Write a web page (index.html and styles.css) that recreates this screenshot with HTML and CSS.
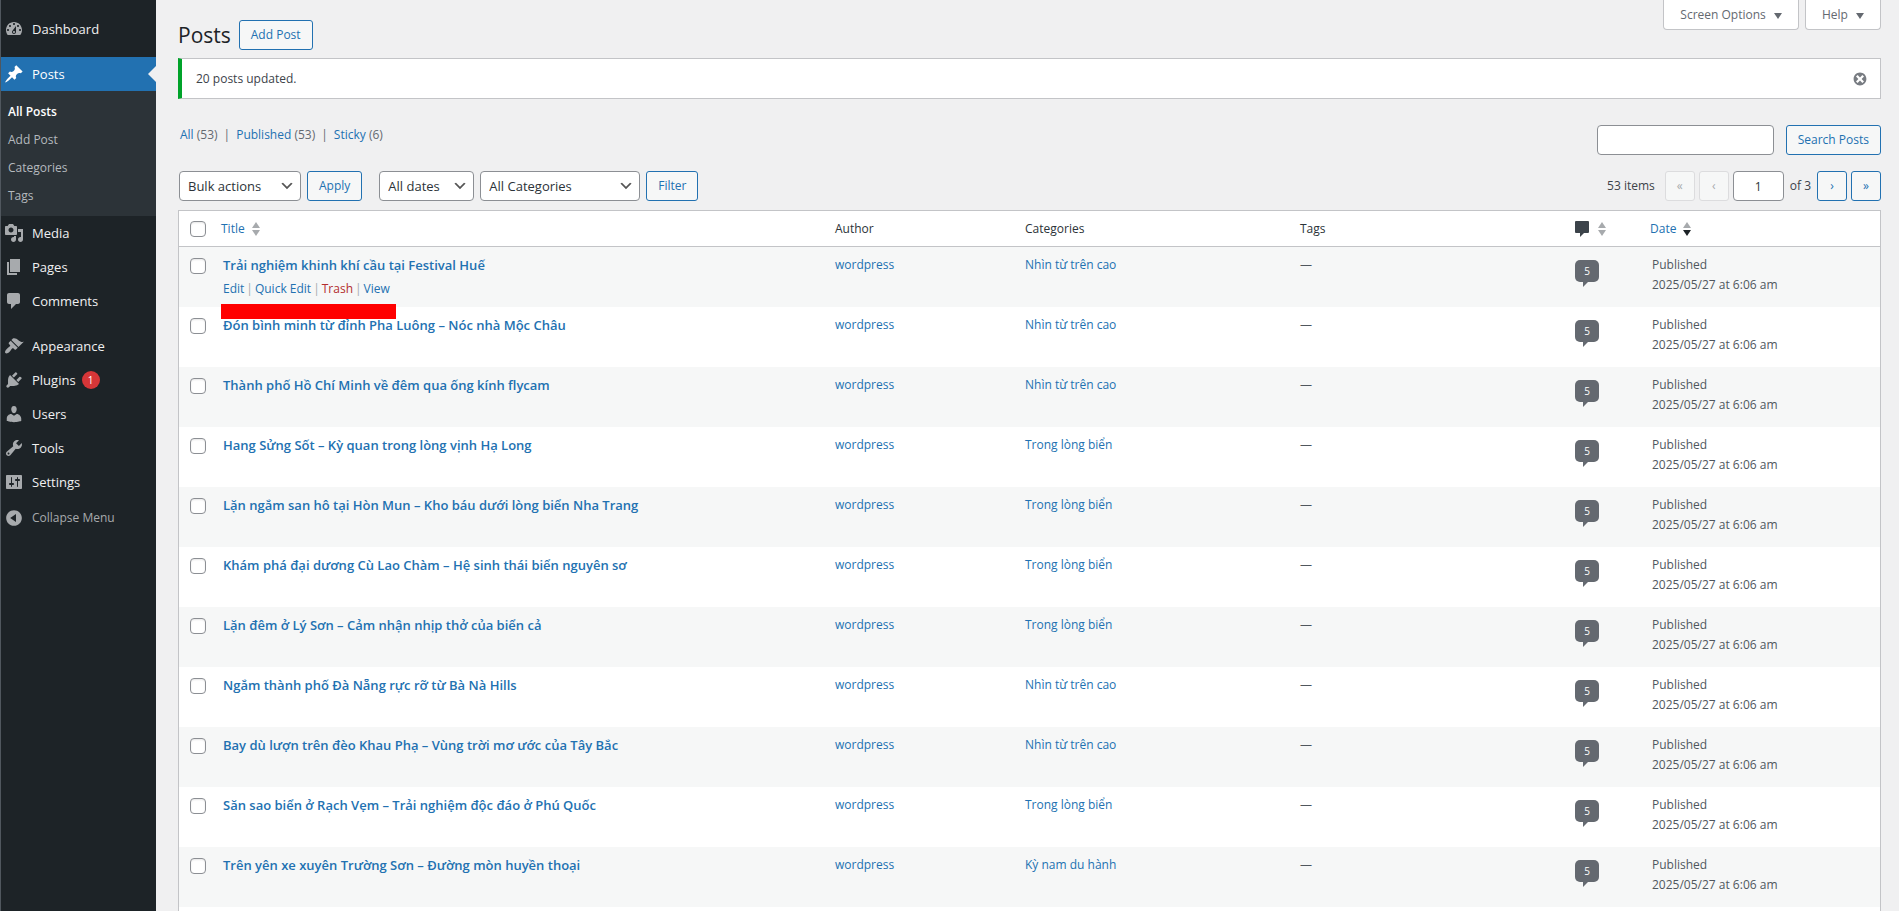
FILE: index.html
```
<!DOCTYPE html>
<html lang="en">
<head>
  <meta charset="UTF-8">
  <title>Posts</title>
  <link rel="stylesheet" href="styles.css">
</head>
<body>
<div id="adminmenu">
  <ul class="menu">
    <li><a href="#"><svg viewBox="0 0 20 20"><path d="M3.76 16h12.48c1.1-1.37 1.76-3.11 1.76-5 0-4.42-3.58-8-8-8s-8 3.58-8 8c0 1.89.66 3.63 1.76 5zM10 4c.55 0 1 .45 1 1s-.45 1-1 1-1-.45-1-1 .45-1 1-1zM6 6c.55 0 1 .45 1 1s-.45 1-1 1-1-.45-1-1 .45-1 1-1zm8 0c.55 0 1 .45 1 1s-.45 1-1 1-1-.45-1-1 .45-1 1-1zm-5.37 5.55L12 7v6c0 1.1-.9 2-2 2s-2-.9-2-2c0-.57.24-1.08.63-1.45zM4 10c.55 0 1 .45 1 1s-.45 1-1 1-1-.45-1-1 .45-1 1-1zm12 0c.55 0 1 .45 1 1s-.45 1-1 1-1-.45-1-1 .45-1 1-1zm-5 3c0-.55-.45-1-1-1s-1 .45-1 1 .45 1 1 1 1-.45 1-1z"/></svg>Dashboard</a></li>
    <li class="separator"></li>
    <li class="current"><a href="#"><svg viewBox="0 0 20 20"><path d="M10.44 3.02l1.82-1.82 6.36 6.35-1.83 1.82c-1.05-.68-2.48-.57-3.41.36l-.75.75c-.92.93-1.04 2.35-.35 3.41l-1.83 1.82-2.41-2.41-2.8 2.79c-.42.42-3.38 2.71-3.8 2.29s1.86-3.39 2.28-3.81l2.79-2.79L4.1 9.36l1.83-1.82c1.05.69 2.48.57 3.4-.36l.75-.75c.93-.92 1.05-2.35.36-3.41z"/></svg>Posts</a>
      <ul class="submenu">
        <li><a href="#" class="on">All Posts</a></li>
        <li><a href="#">Add Post</a></li>
        <li><a href="#">Categories</a></li>
        <li><a href="#">Tags</a></li>
      </ul>
    </li>
    <li><a href="#"><svg viewBox="0 0 20 20"><path d="M13 11V4c0-.55-.45-1-1-1h-1.67L9 1H5L3.67 3H2c-.55 0-1 .45-1 1v7c0 .55.45 1 1 1h10c.55 0 1-.45 1-1zM7 4.5c1.38 0 2.5 1.12 2.5 2.5S8.38 9.5 7 9.5 4.5 8.38 4.5 7 5.62 4.5 7 4.5zM14 6h5v10.5c0 1.38-1.12 2.5-2.5 2.5S14 17.88 14 16.5s1.12-2.5 2.5-2.5c.17 0 .34.02.5.05V9h-3V6zm-4 8.05V13h2v3.5c0 1.38-1.12 2.5-2.5 2.5S7 17.88 7 16.5 8.12 14 9.5 14c.17 0 .34.02.5.05z"/></svg>Media</a></li>
    <li><a href="#"><svg viewBox="0 0 20 20"><path d="M6 15V2h10v13H6zm-1 1h8v2H3V5h2v11z"/></svg>Pages</a></li>
    <li><a href="#"><svg viewBox="0 0 20 20"><path d="M5 2h9c1.1 0 2 .9 2 2v7c0 1.1-.9 2-2 2h-2l-5 5v-5H5c-1.1 0-2-.9-2-2V4c0-1.1.9-2 2-2z"/></svg>Comments</a></li>
    <li class="separator"></li>
    <li><a href="#"><svg viewBox="0 0 20 20"><path d="M14.48 11.06L7.41 3.99l1.5-1.5c.5-.56 2.3-.47 3.51.32 1.21.8 1.43 1.28 2.91 2.1 1.18.64 2.45 1.26 4.45.85zm-.71.71L6.7 4.7 4.93 6.47c-.39.39-.39 1.02 0 1.41l1.06 1.06c.39.39.39 1.03 0 1.42-.6.6-1.43 1.11-2.21 1.69-.35.26-.7.53-1.01.84C1.43 14.23.4 16.08 1.4 17.07c.99 1 2.84-.03 4.18-1.36.31-.31.58-.66.85-1.02.57-.78 1.08-1.61 1.69-2.21.39-.39 1.02-.39 1.41 0l1.06 1.06c.39.39 1.02.39 1.41 0z"/></svg>Appearance</a></li>
    <li><a href="#"><svg viewBox="0 0 20 20"><path d="M13.11 4.36L9.87 7.6 8 5.73l3.24-3.24c.35-.34 1.05-.2 1.56.32.52.51.66 1.21.31 1.55zm-8 1.77l.91-1.12 9.01 9.01-1.19.84c-.71.71-2.63 1.16-3.82 1.16H6.14L4.9 17.26c-.59.59-1.54.59-2.12 0a1.49 1.49 0 0 1 0-2.12l1.24-1.24v-3.88c0-1.13.4-3.19 1.09-3.89zm7.26 3.97l3.24-3.24c.34-.35 1.04-.21 1.55.31.52.51.66 1.21.31 1.55l-3.24 3.25z"/></svg>Plugins <span class="update-count">1</span></a></li>
    <li><a href="#"><svg viewBox="0 0 20 20"><path d="M10 9.25c-2.27 0-2.73-3.44-2.73-3.44C7 4.02 7.82 2 9.97 2c2.16 0 2.98 2.02 2.71 3.81 0 0-.41 3.44-2.68 3.44zm0 2.57L12.72 10c2.39 0 4.52 2.33 4.52 4.53v2.49s-3.65 1.13-7.24 1.13c-3.65 0-7.24-1.13-7.24-1.13v-2.49c0-2.25 1.94-4.48 4.47-4.48z"/></svg>Users</a></li>
    <li><a href="#"><svg viewBox="0 0 20 20"><path d="M16.68 9.77c-1.34 1.34-3.3 1.67-4.95.99l-5.41 6.52c-.99.99-2.59.99-3.58 0s-.99-2.59 0-3.57l6.52-5.42c-.68-1.65-.35-3.61.99-4.95 1.28-1.28 3.12-1.62 4.72-1.06l-2.89 2.89 2.82 2.82 2.86-2.87c.53 1.58.18 3.39-1.08 4.65zM3.81 16.21c.4.39 1.04.39 1.43 0 .4-.4.4-1.04 0-1.43-.39-.4-1.03-.4-1.43 0-.39.39-.39 1.03 0 1.43z"/></svg>Tools</a></li>
    <li><a href="#"><svg viewBox="0 0 20 20"><path d="M18 16V4c0-.55-.45-1-1-1H3c-.55 0-1 .45-1 1v12c0 .55.45 1 1 1h14c.55 0 1-.45 1-1zM8 11h1c.55 0 1 .45 1 1s-.45 1-1 1H8v1.5c0 .28-.22.5-.5.5s-.5-.22-.5-.5V13H6c-.55 0-1-.45-1-1s.45-1 1-1h1V5.5c0-.28.22-.5.5-.5s.5.22.5.5V11zm5-2h-1c-.55 0-1-.45-1-1s.45-1 1-1h1V5.5c0-.28.22-.5.5-.5s.5.22.5.5V7h1c.55 0 1 .45 1 1s-.45 1-1 1h-1v5.5c0 .28-.22.5-.5.5s-.5-.22-.5-.5V9z"/></svg>Settings</a></li>
    <li><button type="button" class="collapse"><svg viewBox="0 0 20 20"><path d="M10 2.16c4.33 0 7.84 3.51 7.84 7.84s-3.51 7.84-7.84 7.84S2.16 14.33 2.16 10 5.71 2.16 10 2.16zm2 11.72V6.12L6.18 9.97z"/></svg>Collapse Menu</button></li>
  </ul>
</div>

<div id="content">
  <div class="screen-meta">
    <button type="button">Screen Options <i class="down"></i></button>
    <button type="button">Help <i class="down"></i></button>
  </div>

  <div class="heading">
    <h1>Posts</h1>
    <a href="#" class="button">Add Post</a>
  </div>

  <div class="notice">
    <p>20 posts updated.</p>
    <button type="button" class="dismiss" aria-label="Dismiss this notice"><svg viewBox="0 0 20 20"><path d="M10 2c4.42 0 8 3.58 8 8s-3.58 8-8 8-8-3.58-8-8 3.58-8 8-8zm5 11l-3-3 3-3-2-2-3 3-3-3-2 2 3 3-3 3 2 2 3-3 3 3z"/></svg></button>
  </div>

  <div class="filters">
    <ul class="views">
      <li><a href="#">All</a> (53)</li>
      <li><a href="#">Published</a> (53)</li>
      <li><a href="#">Sticky</a> (6)</li>
    </ul>
    <div class="search">
      <input type="search" aria-label="Search Posts">
      <button type="button" class="button">Search Posts</button>
    </div>
  </div>

  <div class="tablenav">
    <div class="actions">
      <select class="bulk" aria-label="Select bulk action"><option>Bulk actions</option></select>
      <button type="button" class="button">Apply</button>
    </div>
    <div class="actions">
      <select class="dates" aria-label="Filter by date"><option>All dates</option></select>
      <select class="cats" aria-label="Filter by category"><option>All Categories</option></select>
      <button type="button" class="button">Filter</button>
    </div>
    <div class="pages">
      <span class="total">53 items</span>
      <button type="button" class="button" disabled>«</button>
      <button type="button" class="button" disabled>‹</button>
      <input type="text" value="1" aria-label="Current page">
      <span class="of">of 3</span>
      <a href="#" class="button">›</a>
      <a href="#" class="button">»</a>
    </div>
  </div>

  <table class="posts">
    <colgroup>
      <col class="col-check"><col><col class="col-author"><col class="col-cats"><col class="col-tags"><col class="col-comments"><col class="col-date">
    </colgroup>
    <thead>
      <tr>
        <th class="check"><input type="checkbox" aria-label="Select All"></th>
        <th><a href="#">Title<i class="sort"></i></a></th>
        <th>Author</th>
        <th>Categories</th>
        <th>Tags</th>
        <th class="comments"><a href="#" aria-label="Comments"><svg viewBox="0 0 14 16"><path d="M1 0h12a1 1 0 0 1 1 1v10a1 1 0 0 1-1 1H9l-4 4v-4H1a1 1 0 0 1-1-1V1a1 1 0 0 1 1-1z"/></svg><i class="sort"></i></a></th>
        <th><a href="#">Date<i class="sort desc"></i></a></th>
      </tr>
    </thead>
    <tbody>
      <tr>
        <td class="check"><input type="checkbox" aria-label="Select post"></td>
        <td class="title"><a href="#">Trải nghiệm khinh khí cầu tại Festival Huế</a>
          <div class="row-actions"><a href="#">Edit</a> | <a href="#">Quick Edit</a> | <a href="#" class="trash">Trash</a> | <a href="#">View</a></div>
          <span class="marker"></span>
        </td>
        <td><a href="#">wordpress</a></td>
        <td><a href="#">Nhìn từ trên cao</a></td>
        <td>—</td>
        <td class="comments"><a href="#" class="count">5</a></td>
        <td>Published<br>2025/05/27 at 6:06 am</td>
      </tr>
      <tr>
        <td class="check"><input type="checkbox" aria-label="Select post"></td>
        <td class="title"><a href="#">Đón bình minh từ đỉnh Pha Luông – Nóc nhà Mộc Châu</a></td>
        <td><a href="#">wordpress</a></td>
        <td><a href="#">Nhìn từ trên cao</a></td>
        <td>—</td>
        <td class="comments"><a href="#" class="count">5</a></td>
        <td>Published<br>2025/05/27 at 6:06 am</td>
      </tr>
      <tr>
        <td class="check"><input type="checkbox" aria-label="Select post"></td>
        <td class="title"><a href="#">Thành phố Hồ Chí Minh về đêm qua ống kính flycam</a></td>
        <td><a href="#">wordpress</a></td>
        <td><a href="#">Nhìn từ trên cao</a></td>
        <td>—</td>
        <td class="comments"><a href="#" class="count">5</a></td>
        <td>Published<br>2025/05/27 at 6:06 am</td>
      </tr>
      <tr>
        <td class="check"><input type="checkbox" aria-label="Select post"></td>
        <td class="title"><a href="#">Hang Sửng Sốt – Kỳ quan trong lòng vịnh Hạ Long</a></td>
        <td><a href="#">wordpress</a></td>
        <td><a href="#">Trong lòng biển</a></td>
        <td>—</td>
        <td class="comments"><a href="#" class="count">5</a></td>
        <td>Published<br>2025/05/27 at 6:06 am</td>
      </tr>
      <tr>
        <td class="check"><input type="checkbox" aria-label="Select post"></td>
        <td class="title"><a href="#">Lặn ngắm san hô tại Hòn Mun – Kho báu dưới lòng biển Nha Trang</a></td>
        <td><a href="#">wordpress</a></td>
        <td><a href="#">Trong lòng biển</a></td>
        <td>—</td>
        <td class="comments"><a href="#" class="count">5</a></td>
        <td>Published<br>2025/05/27 at 6:06 am</td>
      </tr>
      <tr>
        <td class="check"><input type="checkbox" aria-label="Select post"></td>
        <td class="title"><a href="#">Khám phá đại dương Cù Lao Chàm – Hệ sinh thái biển nguyên sơ</a></td>
        <td><a href="#">wordpress</a></td>
        <td><a href="#">Trong lòng biển</a></td>
        <td>—</td>
        <td class="comments"><a href="#" class="count">5</a></td>
        <td>Published<br>2025/05/27 at 6:06 am</td>
      </tr>
      <tr>
        <td class="check"><input type="checkbox" aria-label="Select post"></td>
        <td class="title"><a href="#">Lặn đêm ở Lý Sơn – Cảm nhận nhịp thở của biển cả</a></td>
        <td><a href="#">wordpress</a></td>
        <td><a href="#">Trong lòng biển</a></td>
        <td>—</td>
        <td class="comments"><a href="#" class="count">5</a></td>
        <td>Published<br>2025/05/27 at 6:06 am</td>
      </tr>
      <tr>
        <td class="check"><input type="checkbox" aria-label="Select post"></td>
        <td class="title"><a href="#">Ngắm thành phố Đà Nẵng rực rỡ từ Bà Nà Hills</a></td>
        <td><a href="#">wordpress</a></td>
        <td><a href="#">Nhìn từ trên cao</a></td>
        <td>—</td>
        <td class="comments"><a href="#" class="count">5</a></td>
        <td>Published<br>2025/05/27 at 6:06 am</td>
      </tr>
      <tr>
        <td class="check"><input type="checkbox" aria-label="Select post"></td>
        <td class="title"><a href="#">Bay dù lượn trên đèo Khau Phạ – Vùng trời mơ ước của Tây Bắc</a></td>
        <td><a href="#">wordpress</a></td>
        <td><a href="#">Nhìn từ trên cao</a></td>
        <td>—</td>
        <td class="comments"><a href="#" class="count">5</a></td>
        <td>Published<br>2025/05/27 at 6:06 am</td>
      </tr>
      <tr>
        <td class="check"><input type="checkbox" aria-label="Select post"></td>
        <td class="title"><a href="#">Săn sao biển ở Rạch Vẹm – Trải nghiệm độc đáo ở Phú Quốc</a></td>
        <td><a href="#">wordpress</a></td>
        <td><a href="#">Trong lòng biển</a></td>
        <td>—</td>
        <td class="comments"><a href="#" class="count">5</a></td>
        <td>Published<br>2025/05/27 at 6:06 am</td>
      </tr>
      <tr>
        <td class="check"><input type="checkbox" aria-label="Select post"></td>
        <td class="title"><a href="#">Trên yên xe xuyên Trường Sơn – Đường mòn huyền thoại</a></td>
        <td><a href="#">wordpress</a></td>
        <td><a href="#">Kỳ nam du hành</a></td>
        <td>—</td>
        <td class="comments"><a href="#" class="count">5</a></td>
        <td>Published<br>2025/05/27 at 6:06 am</td>
      </tr>
      <tr><td colspan="7"></td></tr>
    </tbody>
  </table>
</div>
</body>
</html>
```
FILE: styles.css
```
* {
  box-sizing: border-box;
}

html {
  overflow: hidden;
}

body, ul, li, h1, p {
  margin: 0;
  padding: 0;
  list-style: none;
}

body {
  display: flex;
  height: 100vh;
  overflow: hidden;
  background: #f0f0f1;
  color: #3c434a;
  font: 12px/20px "Open Sans", "Noto Sans", sans-serif;
}

a {
  color: #2271b1;
  text-decoration: none;
}

button, input, select {
  font: inherit;
  color: inherit;
  margin: 0;
}

svg {
  display: block;
  fill: currentColor;
}

/* left menu */
#adminmenu {
  flex: none;
  width: 156px;
  padding-top: 12px;
  background: #1d2327;
  border-left: 1px solid #50575e;
}

.menu > li > a, .collapse {
  display: flex;
  align-items: center;
  width: 100%;
  height: 34px;
  padding: 0 0 0 3px;
  font-size: 13px;
  color: #f0f0f1;
}

.menu svg {
  width: 20px;
  height: 20px;
  margin-right: 8px;
  color: #a7aaad;
}

.menu .separator {
  height: 11px;
}

.menu .current > a {
  position: relative;
  background: #2271b1;
  color: #fff;
}

.menu .current > a svg {
  color: #fff;
}

.menu .current > a:after {
  content: "";
  position: absolute;
  right: 0;
  top: 9px;
  border: 8px solid transparent;
  border-right-color: #f0f0f1;
  border-left: 0;
}

.submenu {
  padding: 7px 0 6px;
  background: #2c3338;
}

.submenu a {
  display: block;
  padding: 4px 7px;
  color: #b4b9be;
}

.submenu .on {
  color: #fff;
  font-weight: 600;
}

.update-count {
  width: 18px;
  height: 18px;
  margin-left: 6px;
  border-radius: 9px;
  background: #d63638;
  color: #fff;
  font-size: 10px;
  line-height: 18px;
  text-align: center;
}

.menu .collapse {
  margin-top: 2px;
  border: 0;
  background: none;
  color: #a7aaad;
  font-size: 12px;
}

/* page */
#content {
  position: relative;
  flex: 1;
  padding: 20px 18px 0 22px;
}

.screen-meta {
  position: absolute;
  top: 0;
  right: 18px;
  display: flex;
  gap: 6px;
}

.screen-meta button {
  height: 30px;
  padding: 0 16px;
  border: 1px solid #c3c4c7;
  border-top: 0;
  border-radius: 0 0 4px 4px;
  background: #fff;
  color: #646970;
}

.down {
  display: inline-block;
  margin-left: 5px;
  border: 4px solid transparent;
  border-top: 6px solid #646970;
  border-bottom: 0;
}

.button {
  height: 30px;
  padding: 0 11px;
  border: 1px solid #2271b1;
  border-radius: 3px;
  background: #f6f7f7;
  color: #2271b1;
  line-height: 28px;
  text-align: center;
  white-space: nowrap;
}

.button:disabled {
  border-color: #dcdcde;
  color: #a7aaad;
}

.heading {
  display: flex;
  align-items: center;
  gap: 8px;
}

.heading h1 {
  color: #1d2327;
  font-size: 21px;
  font-weight: 400;
  line-height: 30px;
}

.notice {
  display: flex;
  align-items: center;
  justify-content: space-between;
  height: 41px;
  margin-top: 8px;
  padding: 0 12px 0 14px;
  border: 1px solid #c3c4c7;
  border-left: 4px solid #00a32a;
  background: #fff;
}

.dismiss {
  padding: 0;
  border: 0;
  background: none;
  color: #787c82;
}

.dismiss svg {
  width: 16px;
  height: 16px;
}

.filters {
  display: flex;
  justify-content: space-between;
  margin-top: 26px;
}

.views {
  display: flex;
  padding-left: 2px;
  color: #646970;
}

.views li + li:before {
  content: "|";
  margin: 0 6px;
}

.search {
  display: flex;
  gap: 12px;
}

.search input, .pages input, select {
  height: 30px;
  border: 1px solid #8c8f94;
  border-radius: 4px;
  background: #fff;
  color: #2c3338;
}

.search input {
  width: 177px;
}

.tablenav {
  display: flex;
  margin: 16px 0 9px 1px;
}

.actions {
  display: flex;
  gap: 6px;
  margin-right: 17px;
}

select {
  appearance: none;
  padding: 0 20px 0 8px;
  font-size: 13px;
  background: #fff url("data:image/svg+xml,%3Csvg xmlns='http://www.w3.org/2000/svg' width='16' height='16' viewBox='0 0 20 20'%3E%3Cpath d='M5 6l5 5 5-5 2 1-7 7-7-7z' fill='%23555'/%3E%3C/svg%3E") no-repeat right 5px center;
}

.bulk {
  width: 122px;
}

.dates {
  width: 95px;
}

.cats {
  width: 160px;
}

.pages {
  display: flex;
  align-items: center;
  gap: 4px;
  margin-left: auto;
}

.pages .button {
  width: 30px;
  padding: 0;
}

.pages input {
  width: 51px;
  text-align: center;
}

.total {
  margin-right: 6px;
}

.of {
  margin: 0 2px;
}

/* posts table */
.posts {
  width: 100%;
  table-layout: fixed;
  border: 1px solid #c3c4c7;
  border-spacing: 0;
  background: #fff;
}

.col-check {
  width: 34px;
}

.col-author {
  width: 190px;
}

.col-cats {
  width: 275px;
}

.col-tags {
  width: 277px;
}

.col-comments {
  width: 75px;
}

.col-date {
  width: 238px;
}

.posts th {
  height: 36px;
  padding: 0 8px;
  border-bottom: 1px solid #c3c4c7;
  color: #2c3338;
  font-weight: 400;
  text-align: left;
}

.posts th a {
  display: flex;
  align-items: center;
}

.posts td {
  height: 60px;
  padding: 8px 10px;
  color: #50575e;
  vertical-align: top;
}

.posts th:nth-child(n+3):nth-child(-n+5) {
  padding-left: 10px;
}

.posts tbody tr:nth-child(odd) {
  background: #f6f7f7;
}

.posts .check {
  padding: 11px 0 0 11px;
  vertical-align: top;
}

.posts thead .check {
  padding-top: 10px;
}

.check input {
  display: block;
  appearance: none;
  width: 16px;
  height: 16px;
  border: 1px solid #8c8f94;
  border-radius: 4px;
  background: #fff;
  box-shadow: inset 0 1px 2px rgba(0, 0, 0, .1);
}

.title {
  position: relative;
}

.title > a {
  display: block;
  font-size: 13px;
  font-weight: 600;
}

.row-actions {
  display: flex;
  gap: 2px;
  margin-top: 4px;
  color: #a7aaad;
}

.row-actions .trash {
  color: #b32d2e;
}

.marker {
  position: absolute;
  left: 8px;
  top: 57px;
  width: 175px;
  height: 15px;
  background: #f00;
}

.sort {
  width: 8px;
  height: 14px;
  margin-left: 7px;
}

.sort:before, .sort:after {
  content: "";
  display: block;
  border: 4px solid transparent;
}

.sort:before {
  margin-bottom: 2px;
  border-top: 0;
  border-bottom: 6px solid #a7aaad;
}

.sort:after {
  border-bottom: 0;
  border-top: 6px solid #a7aaad;
}

.sort.desc:after {
  border-top-color: #1d2327;
}

.comments svg {
  width: 14px;
  height: 16px;
  color: #3c434a;
}

.comments .sort {
  margin-left: 9px;
}

.posts td.comments {
  padding: 13px 8px 0;
}

.count {
  position: relative;
  display: block;
  width: 24px;
  height: 22px;
  border-radius: 5px;
  background: #646970;
  color: #fff;
  font-size: 10px;
  line-height: 22px;
  text-align: center;
}

.count:after {
  content: "";
  position: absolute;
  left: 8px;
  top: 22px;
  border-top: 5px solid #646970;
  border-right: 5px solid transparent;
}
```
